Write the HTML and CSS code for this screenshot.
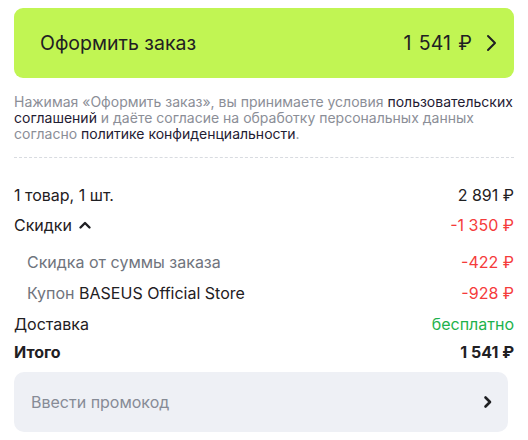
FILE: index.html
```html
<!DOCTYPE html>
<html lang="ru">
<head>
<meta charset="utf-8">
<link rel="stylesheet" href="styles.css">
</head>
<body>
<div class="card">
  <div class="top">
    <button class="checkout">
      <span class="checkout-label">Оформить заказ</span>
      <span class="checkout-right">
        <span class="checkout-price">1 541 ₽</span>
        <svg class="chev" width="14" height="18" viewBox="0 0 14 18"><path d="M4 2l7 7-7 7" fill="none" stroke="#1f2023" stroke-width="2" stroke-linecap="round" stroke-linejoin="round"/></svg>
      </span>
    </button>
    <p class="note">Нажимая «Оформить заказ», вы принимаете условия <a>пользовательских соглашений</a> и даёте согласие на обработку персональных данных согласно <a>политике конфиденциальности</a>.</p>
  </div>
  <div class="divider"></div>
  <div class="summary">
    <div class="row"><span>1 товар, 1 шт.</span><span>2 891 ₽</span></div>
    <div class="row"><span class="toggle">Скидки <svg width="14" height="10" viewBox="0 0 14 10"><path d="M2.5 7.5L7 3l4.5 4.5" fill="none" stroke="#1f2023" stroke-width="2.4" stroke-linecap="round" stroke-linejoin="round"/></svg></span><span class="red">-1 350 ₽</span></div>
    <div class="sub">
      <div class="row"><span class="gray">Скидка от суммы заказа</span><span class="red">-422 ₽</span></div>
      <div class="row"><span><span class="gray">Купон</span> BASEUS Official Store</span><span class="red">-928 ₽</span></div>
    </div>
    <div class="row delivery"><span>Доставка</span><span class="green">бесплатно</span></div>
    <div class="row total"><span>Итого</span><span>1 541 ₽</span></div>
  </div>
  <button class="promo">
    <span>Ввести промокод</span>
    <svg width="12" height="14" viewBox="0 0 12 14"><path d="M3.5 2.5L8 7l-4.5 4.5" fill="none" stroke="#1f2023" stroke-width="2.6" stroke-linecap="round" stroke-linejoin="round"/></svg>
  </button>
</div>
</body>
</html>
```
FILE: styles.css
```css
* { box-sizing: border-box; }
html, body { margin: 0; padding: 0; background: #fff; }
body {
  font-family: Inter, "Noto Sans", sans-serif;
  color: #1f2023;
  width: 528px;
  height: 440px;
  overflow: hidden;
}
.card { padding: 8px 14px 0 14px; }
.checkout {
  display: flex;
  align-items: center;
  justify-content: space-between;
  width: 500px;
  height: 70px;
  border: 0;
  border-radius: 9px;
  background: #c1f553;
  padding: 0 16px 0 26px;
  font-family: inherit;
  font-size: 19.5px;
  color: #1f2023;
  cursor: pointer;
}
.checkout-price { word-spacing: 2px; }
.checkout-right { display: flex; align-items: center; gap: 12px; }
.chev { display: block; }
.note {
  margin: 16px 0 0 0;
  font-size: 14px;
  line-height: 16px;
  color: #8b8e97;
}
.note a { color: #1f2033; }
.divider {
  margin-top: 15px;
  border-top: 1px dashed #d8dbe0;
  height: 0;
}
.summary { padding-top: 26px; font-size: 16px; }
.row {
  display: flex;
  justify-content: space-between;
  align-items: center;
  height: 22px;
  margin-bottom: 8px;
}
.toggle { display: flex; align-items: center; gap: 6px; }
.toggle svg { display: block; }
.sub { padding: 7px 0 0 13px; }
.sub .row { margin-bottom: 9px; }
.delivery { margin-bottom: 6px; }
.gray { color: #70747d; }
.red { color: #f53b3b; }
.green { color: #1eb24c; }
.total { font-weight: 700; margin-bottom: 0; }
.promo {
  margin-top: 9px;
  display: flex;
  align-items: center;
  justify-content: space-between;
  width: 494px;
  height: 60px;
  border: 0;
  border-radius: 10px;
  background: #eef0f5;
  padding: 0 14px 0 17px;
  font-family: inherit;
  font-size: 16px;
  color: #868b96;
}
.promo svg { display: block; }
```
